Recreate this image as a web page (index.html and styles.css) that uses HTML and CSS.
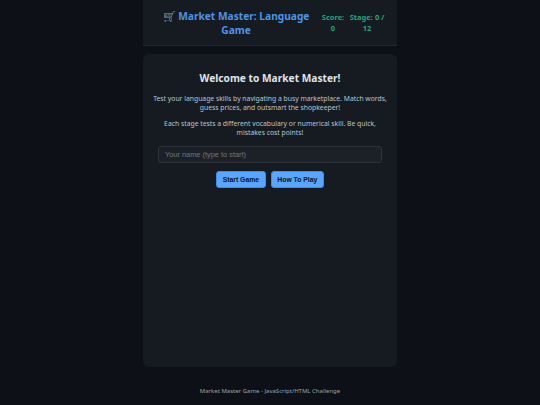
FILE: index.html
```html
<!DOCTYPE html>
<html lang="en">
<head>
    <meta charset="UTF-8">
    <meta name="viewport" content="width=device-width, initial-scale=1.0">
    <title>Market Master</title>
    <link rel="stylesheet" href="styles.css">
</head>
<body>
    <div class="container">
        <header class="header">
            <h1 class="title">🛒 Market Master: Language Game</h1>
            <div class="stats">
                <span class="stat">Score: 0</span>
                <span class="stat stage">Stage: 0 / 12</span>
            </div>
        </header>

        <main class="card">
            <h2>Welcome to Market Master!</h2>
            <p>Test your language skills by navigating a busy marketplace. Match words, guess prices, and outsmart the shopkeeper!</p>
            <p>Each stage tests a different vocabulary or numerical skill. Be quick, mistakes cost points!</p>
            <input type="text" class="name-input" placeholder="Your name (type to start)">
            <div class="actions">
                <button class="btn">Start Game</button>
                <button class="btn">How To Play</button>
            </div>
        </main>

        <footer class="footer">Market Master Game - JavaScript/HTML Challenge</footer>
    </div>
</body>
</html>
```

FILE: styles.css
```css
* {
    margin: 0;
    padding: 0;
    box-sizing: border-box;
}

body {
    background-color: #0d1117;
    color: #c9d1d9;
    font-family: 'Noto Sans', sans-serif;
    height: 405px;
    overflow: hidden;
}

.container {
    width: 254px;
    margin: 0 auto;
    display: flex;
    flex-direction: column;
    height: 405px;
}

.header {
    background-color: #161b22;
    border-bottom: 1px solid #21262d;
    height: 46px;
    padding: 8px 12px 8px 10px;
    display: flex;
    align-items: center;
    justify-content: space-between;
}

.title {
    flex: 1;
    font-size: 10.2px;
    line-height: 14px;
    font-weight: 700;
    color: #4d94e6;
    text-align: center;
}

.stats {
    display: flex;
    gap: 2px;
    font-size: 7.5px;
}

.stat {
    width: 28px;
    line-height: 11px;
    font-weight: 700;
    color: #20a67c;
    text-align: center;
}

.stage {
    width: 36px;
}

.card {
    background-color: #161b22;
    border-radius: 6px;
    margin-top: 8px;
    height: 313px;
    padding: 17px 10px;
    text-align: center;
}

.card h2 {
    font-size: 10.2px;
    line-height: 14px;
    color: #dfe5eb;
    margin-bottom: 8.5px;
}

.card p {
    font-size: 6.8px;
    line-height: 9.5px;
    color: #bcc4cc;
    margin-bottom: 6px;
}

.name-input {
    display: block;
    width: 224px;
    height: 17px;
    margin: 8.5px auto 0;
    padding: 0 6px;
    background-color: #1c2128;
    border: 1px solid #2d333b;
    border-radius: 3px;
    color: #c9d1d9;
    font-family: 'Liberation Sans', sans-serif;
    font-size: 7.4px;
}

.name-input::placeholder {
    color: #6e7681;
}

.actions {
    display: flex;
    justify-content: center;
    gap: 5px;
    margin-top: 8px;
}

.btn {
    height: 16.5px;
    padding: 0 5.7px;
    background-color: #58a6ff;
    border: 1px solid #388bfd;
    border-radius: 3px;
    color: #0d1117;
    font-family: 'Liberation Sans', sans-serif;
    font-size: 6.8px;
    font-weight: 700;
    cursor: pointer;
}

.footer {
    margin-top: 20px;
    font-size: 6px;
    line-height: 9px;
    color: #9aa2ab;
    text-align: center;
}
```
